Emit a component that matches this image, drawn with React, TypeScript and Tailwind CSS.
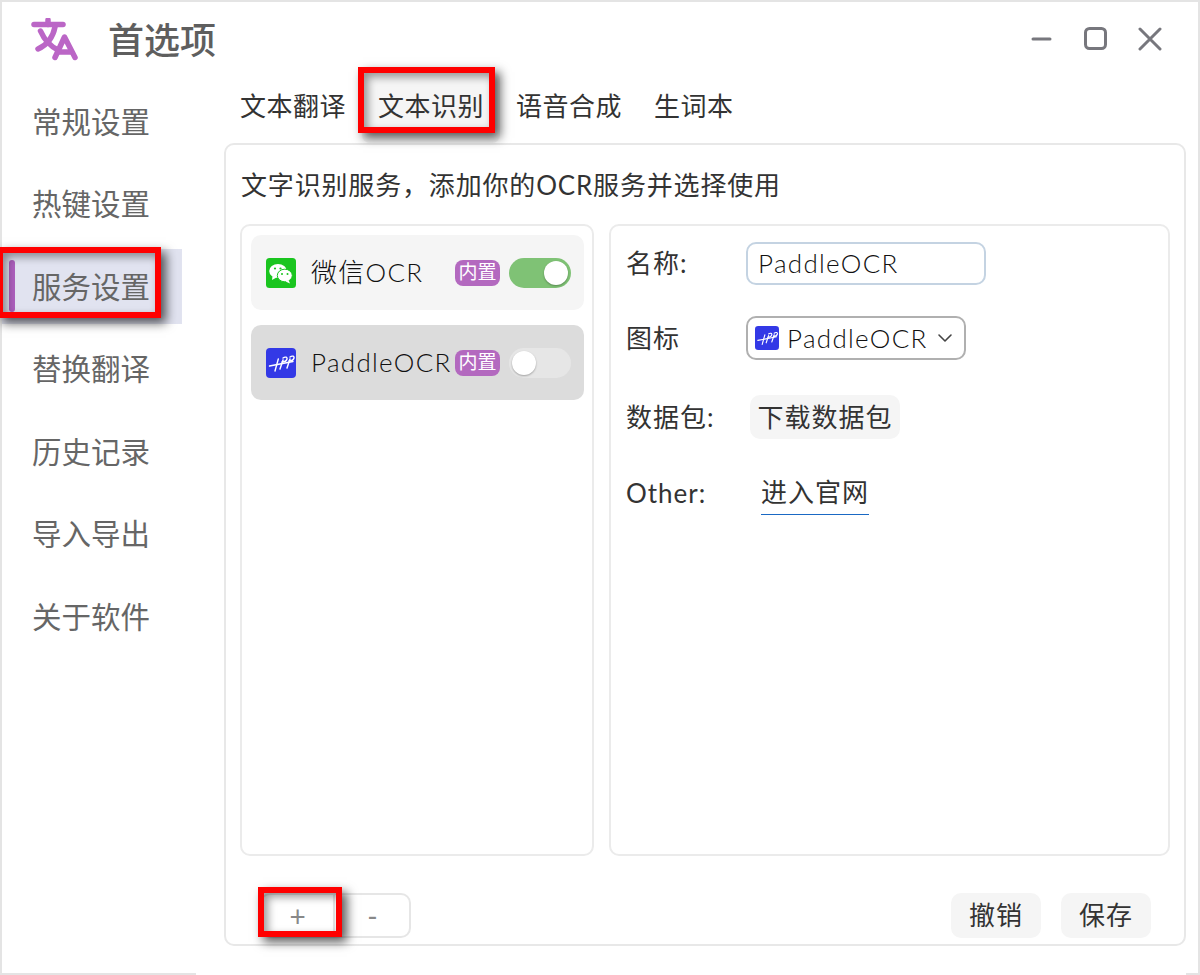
const menu = ["常规设置", "热键设置", "服务设置", "替换翻译", "历史记录", "导入导出", "关于软件"]
const tabs = ["文本翻译", "文本识别", "语音合成", "生词本"]

function Logo() {
  return (
    <svg viewBox="0 0 48 44" className="h-[44px] w-[48px]" fill="none" stroke="#bb66c6" strokeWidth="5.500" strokeLinecap="round" strokeLinejoin="round">
      <path d="M4 6.500H33" />
      <path d="M18 2V6.500" />
      <path d="M10.500 13C14 21 20 28 28 32" />
      <path d="M25 9C23 19 17 27 8 31" />
      <path d="M25 39.500L34.500 19L45 39.500" />
      <path d="M28 34H40" />
    </svg>
  )
}

function WechatIcon({ size = 30 }: { size?: number }) {
  return (
    <svg viewBox="0 0 30 30" width={size} height={size} className="shrink-0">
      <rect width="30" height="30" rx="3.500" fill="#1ac51f" />
      <ellipse cx="12" cy="13" rx="8.800" ry="7" fill="#fff" />
      <path d="M6.500 18L6 22L10.500 19.500Z" fill="#fff" />
      <ellipse cx="18.800" cy="17.500" rx="7.500" ry="6.300" fill="#fff" stroke="#1ac51f" strokeWidth="1" />
      <path d="M22.500 22L24 25.500L19.500 23.500Z" fill="#fff" />
      <circle cx="9" cy="10.500" r="1.100" fill="#1ac51f" />
      <circle cx="14.500" cy="10.500" r="1.100" fill="#1ac51f" />
      <circle cx="16" cy="16" r="1" fill="#1ac51f" />
      <circle cx="21.500" cy="16" r="1" fill="#1ac51f" />
    </svg>
  )
}

function PaddleIcon({ size = 30 }: { size?: number }) {
  return (
    <svg viewBox="0 0 30 30" width={size} height={size} className="shrink-0">
      <rect width="30" height="30" rx="4" fill="#3339e6" />
      <g fill="none" stroke="#fff" strokeWidth="1.400" strokeLinecap="round" strokeLinejoin="round">
        <path d="M3.500 18L27 13.500" />
        <path d="M9 23L12.300 11" />
        <path d="M14 21L17 12" />
        <path d="M17 10C19 8.500 21.500 9 21 11C20.500 13 18 14 16 14" />
        <path d="M21 20L24 11" />
        <path d="M24 9C26 7.500 28.500 8 28 10C27.500 12 25 13 23 13" />
      </g>
    </svg>
  )
}

function Toggle({ on }: { on: boolean }) {
  return (
    <div className={`flex h-[30px] w-[62px] shrink-0 items-center rounded-full px-[3px] ${on ? "justify-end bg-[#7fc275]" : "justify-start bg-[#e6e6e6]"}`}>
      <div className="h-[24px] w-[24px] rounded-full bg-white shadow-[0_1px_2px_rgba(0,0,0,0.3)]" />
    </div>
  )
}

function ServiceRow({ name, on, selected, icon }: { name: string; on: boolean; selected: boolean; icon: React.ReactNode }) {
  return (
    <div className={`flex h-[75px] items-center rounded-[10px] pl-[15px] pr-[13px] ${selected ? "bg-[#dcdcdc]" : "bg-[#f5f5f5]"}`}>
      {icon}
      <span className="ml-[15px] flex-1 whitespace-nowrap text-[26px] font-light tracking-[1.3px] text-[#111]">{name}</span>
      <span className="mr-[9px] flex h-[26px] w-[45px] shrink-0 items-center justify-center rounded-[8px] bg-[#b369bf] text-[19px] text-white">内置</span>
      <Toggle on={on} />
    </div>
  )
}

function Marker({ className }: { className: string }) {
  return <div className={`pointer-events-none absolute border-[6px] border-[#ff0000] shadow-[5px_5px_10px_rgba(0,0,0,0.65),inset_4px_4px_8px_rgba(0,0,0,0.4)] ${className}`} />
}

export default function App() {
  return (
    <div className="relative h-[975px] w-[1200px] overflow-hidden bg-white font-['Lato','Noto_Sans_CJK_SC',sans-serif] text-[#333]">
      <div className="flex h-full w-full flex-col border-2 border-[#e4e4e4]">
        <header className="flex h-[83px] shrink-0 items-center pb-[8px] pl-[28px] pr-[36px]">
          <Logo />
          <h1 className="ml-[30px] text-[36px] font-medium text-[#5e5e5e]">首选项</h1>
          <div className="-mt-[2px] ml-auto flex items-center gap-[30px] text-[#77777d]">
            <svg width="24" height="24" viewBox="0 0 24 24" fill="none" stroke="currentColor" strokeWidth="3" strokeLinecap="round"><path d="M3 12H20" /></svg>
            <svg width="24" height="24" viewBox="0 0 24 24" fill="none" stroke="currentColor" strokeWidth="3"><rect x="1.500" y="1.500" width="20" height="20" rx="4" /></svg>
            <svg width="24" height="24" viewBox="0 0 24 24" fill="none" stroke="currentColor" strokeWidth="3" strokeLinecap="round"><path d="M2 2L22 22M22 2L2 22" /></svg>
          </div>
        </header>

        <div className="flex min-h-0 flex-1">
          <nav className="-mt-[1px] flex w-[180px] shrink-0 flex-col gap-[7.5px]">
            {menu.map((item) => (
              <div key={item} className={`relative flex h-[75px] items-center pl-[30px] pt-[1px] text-[29.5px] text-[#666] ${item === "服务设置" ? "bg-[#e1e3f0]" : ""}`}>
                {item === "服务设置" && <div className="absolute left-[7px] top-[11px] h-[52px] w-[6px] rounded-full bg-[#ad5fbd]" />}
                {item}
              </div>
            ))}
          </nav>

          <main className="ml-[42px] mr-[12px] flex min-w-0 flex-1 flex-col">
            <div className="-mt-[13px] flex h-[71px] shrink-0 items-center">
              {tabs.map((tab) => (
                <div key={tab} className={`flex h-[71px] items-center rounded-[8px] px-[16px] pb-[2px] text-[26px] tracking-[0.5px] text-[#333] ${tab === "文本识别" ? "bg-[#f5f5f5]" : ""}`}>
                  {tab}
                </div>
              ))}
            </div>
            <section className="mb-[27px] flex min-h-0 flex-1 flex-col rounded-[10px] border-2 border-[#e8e8e8] px-[14px]">
              <p className="flex h-[79px] shrink-0 items-center pl-[1px] pt-[1px] text-[26px] tracking-[0.83px] text-[#333]">文字识别服务，添加你的OCR服务并选择使用</p>
              <div className="flex h-[632px] shrink-0 gap-[15px]">
                <div className="flex w-[354px] shrink-0 flex-col gap-[15px] rounded-[10px] border-2 border-[#ebebeb] py-[9px] pl-[9px] pr-[8px]">
                  <ServiceRow name="微信OCR" on selected={false} icon={<WechatIcon />} />
                  <ServiceRow name="PaddleOCR" on={false} selected icon={<PaddleIcon />} />
                </div>
                <div className="flex flex-1 flex-col rounded-[10px] border-2 border-[#ebebeb] pl-[15px] pt-[16px] text-[26px] tracking-[1px]">
                  <div className="flex h-[43px] items-center">
                    <span className="w-[120px] shrink-0">名称:</span>
                    <div className="flex h-[43px] w-[240px] items-center rounded-[10px] border-2 border-[#c4d3e2] pl-[10px] font-light tracking-[1.3px] text-[#111]">PaddleOCR</div>
                  </div>
                  <div className="mt-[31px] flex h-[44px] items-center">
                    <span className="w-[120px] shrink-0">图标</span>
                    <div className="flex h-[44px] w-[220px] items-center rounded-[10px] border-2 border-[#b0b0b0] pl-[7px] font-light tracking-[1.3px] text-[#111]">
                      <PaddleIcon size={24} />
                      <span className="ml-[8px]">PaddleOCR</span>
                      <svg className="ml-[9px]" width="16" height="10" viewBox="0 0 16 10" fill="none" stroke="#444" strokeWidth="1.600" strokeLinecap="round" strokeLinejoin="round"><path d="M2 2L8 8L14 2" /></svg>
                    </div>
                  </div>
                  <div className="mt-[35px] flex h-[44px] items-center">
                    <span className="w-[124px] shrink-0">数据包:</span>
                    <button className="flex h-[44px] w-[150px] items-center justify-center rounded-[10px] bg-[#f5f5f5]">下载数据包</button>
                  </div>
                  <div className="mt-[32px] flex h-[44px] items-center">
                    <span className="w-[135px] shrink-0">Other:</span>
                    <a className="flex h-[44px] w-[108px] items-center justify-center border-b-[1.5px] border-[#1a69c4]">进入官网</a>
                  </div>
                </div>
              </div>
              <div className="flex flex-1 items-start justify-between pl-[20px] pr-[19px] pt-[37px]">
                <div className="flex h-[45px] w-[151px] rounded-[10px] border-2 border-[#e6e6e6] text-[28px] text-[#888]">
                  <button className="flex w-[73px] items-center justify-center border-r-2 border-[#e6e6e6]">+</button>
                  <button className="flex flex-1 items-center justify-center pl-[1px]">-</button>
                </div>
                <div className="flex gap-[20px] text-[26px] tracking-[1px]">
                  <button className="flex h-[45px] w-[90px] items-center justify-center rounded-[10px] bg-[#f5f5f5]">撤销</button>
                  <button className="flex h-[45px] w-[90px] items-center justify-center rounded-[10px] bg-[#f5f5f5]">保存</button>
                </div>
              </div>
            </section>
          </main>
        </div>
      </div>

      {/* the window's bottom edge only shows at both ends */}
      <div className="absolute bottom-0 left-[196px] h-[2px] w-[990px] bg-white" />

      <Marker className="left-[-3px] top-[247px] h-[71px] w-[164px]" />
      <Marker className="left-[358px] top-[67px] h-[66px] w-[137px]" />
      <Marker className="left-[258px] top-[887px] h-[50px] w-[84px]" />
    </div>
  )
}
